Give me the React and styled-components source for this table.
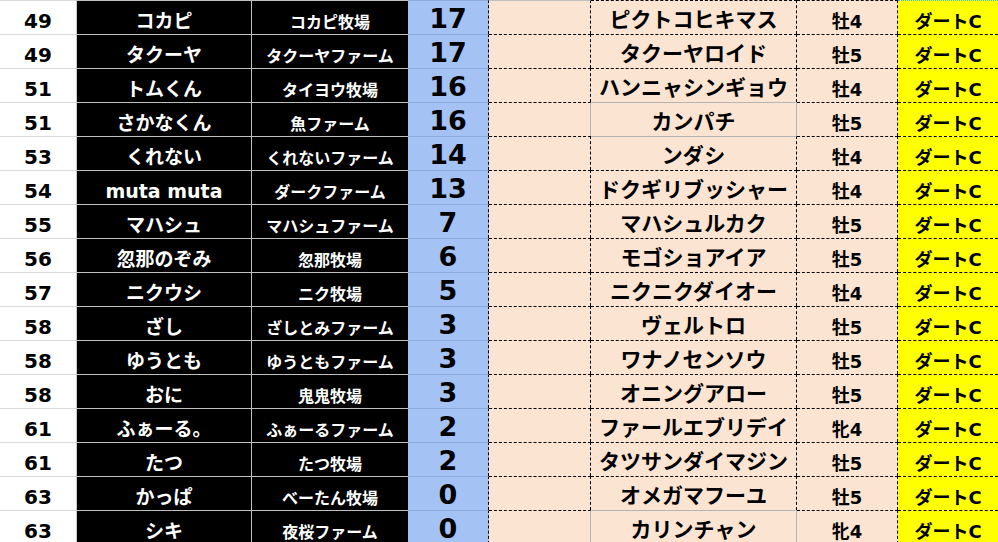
import styled, { createGlobalStyle, css } from 'styled-components';

const GlobalStyle = createGlobalStyle`
  html, body {
    margin: 0;
    padding: 0;
    background: #ffffff;
  }
  body {
    font-family: "DejaVu Sans", "Noto Sans CJK JP", sans-serif;
    font-weight: 700;
  }
`;

const GRID = '#bfbfbf';
const DOT = '1px dashed #000';
const PEACH = '#fce4d2';

// one entry per spreadsheet column
const columns = {
  rank: { width: 77, bg: '#ffffff', color: '#000', size: 20, top: '1px solid #d9d9d9', right: '1px solid #c8c8c8' },
  name: { width: 175, bg: '#000000', color: '#fff', size: 19, top: `1px solid ${GRID}`, right: `1px solid ${GRID}` },
  farm: { width: 156, bg: '#000000', color: '#fff', size: 16, top: `1px solid ${GRID}`, right: 'none' },
  point: { width: 81, bg: '#a4c2f4', color: '#000', size: 27, top: '1px solid #8eaadb', right: DOT },
  blank: { width: 102, bg: PEACH, color: '#000', size: 18, top: DOT, right: DOT },
  horse: { width: 206, bg: PEACH, color: '#000', size: 21, top: DOT, right: DOT },
  sex: { width: 101, bg: PEACH, color: '#000', size: 18, top: DOT, right: DOT },
  course: { width: 100, bg: '#ffff00', color: '#000', size: 18, top: DOT, right: 'none' },
};

const rows = [
  { rank: 49, name: 'コカピ', farm: 'コカピ牧場', point: 17, horse: 'ピクトコヒキマス', sex: '牡4' },
  { rank: 49, name: 'タクーヤ', farm: 'タクーヤファーム', point: 17, horse: 'タクーヤロイド', sex: '牡5' },
  { rank: 51, name: 'トムくん', farm: 'タイヨウ牧場', point: 16, horse: 'ハンニャシンギョウ', sex: '牡4' },
  { rank: 51, name: 'さかなくん', farm: '魚ファーム', point: 16, horse: 'カンパチ', sex: '牡5', boxed: true },
  { rank: 53, name: 'くれない', farm: 'くれないファーム', point: 14, horse: 'ンダシ', sex: '牡4' },
  { rank: 54, name: 'muta muta', farm: 'ダークファーム', point: 13, horse: 'ドクギリブッシャー', sex: '牡4' },
  { rank: 55, name: 'マハシュ', farm: 'マハシュファーム', point: 7, horse: 'マハシュルカク', sex: '牡5' },
  { rank: 56, name: '忽那のぞみ', farm: '忽那牧場', point: 6, horse: 'モゴショアイア', sex: '牡5' },
  { rank: 57, name: 'ニクウシ', farm: 'ニク牧場', point: 5, horse: 'ニクニクダイオー', sex: '牡4' },
  { rank: 58, name: 'ざし', farm: 'ざしとみファーム', point: 3, horse: 'ヴェルトロ', sex: '牡5' },
  { rank: 58, name: 'ゆうとも', farm: 'ゆうともファーム', point: 3, horse: 'ワナノセンソウ', sex: '牡5' },
  { rank: 58, name: 'おに', farm: '鬼鬼牧場', point: 3, horse: 'オニングアロー', sex: '牡5' },
  { rank: 61, name: 'ふぁーる。', farm: 'ふぁーるファーム', point: 2, horse: 'ファールエブリデイ', sex: '牝4' },
  { rank: 61, name: 'たつ', farm: 'たつ牧場', point: 2, horse: 'タツサンダイマジン', sex: '牡5' },
  { rank: 63, name: 'かっぱ', farm: 'べーたん牧場', point: 0, horse: 'オメガマフーユ', sex: '牡5' },
  { rank: 63, name: 'シキ', farm: '夜桜ファーム', point: 0, horse: 'カリンチャン', sex: '牝4', boxed: true },
];

const Sheet = styled.div`
  display: flex;
  flex-direction: column;
  width: 998px;
  height: 542px;
  overflow: hidden;
`;

const Row = styled.div`
  display: grid;
  grid-template-columns: ${Object.values(columns).map((c) => `${c.width}px`).join(' ')};
  height: 34px;
  flex: none;
`;

const Cell = styled.div`
  box-sizing: border-box;
  display: flex;
  align-items: flex-end;
  justify-content: center;
  white-space: nowrap;
  overflow: hidden;
  line-height: 1;
  padding-bottom: calc(5.8px - 0.154em);
  font-size: ${(p) => columns[p.$col].size}px;
  color: ${(p) => columns[p.$col].color};
  background: ${(p) => columns[p.$col].bg};
  border-top: ${(p) => p.$top || columns[p.$col].top};
  border-right: ${(p) => p.$right || columns[p.$col].right};
  ${(p) =>
    p.$first &&
    p.$col === 'blank' &&
    css`
      border-top: 1px solid ${GRID};
    `}
  ${(p) =>
    p.$first &&
    p.$col === 'course' &&
    css`
      border-top: 1px dotted #33c3e6;
    `}
`;

const BOX = '1px solid #b4b4b4';

export default function App() {
  return (
    <>
      <GlobalStyle />
      <Sheet>
        {rows.map((r, i) => {
          const first = i === 0;
          const prevBoxed = i > 0 && rows[i - 1].boxed;
          return (
            <Row key={i}>
              <Cell $col="rank" $first={first}>{r.rank}</Cell>
              <Cell $col="name" $first={first}>{r.name}</Cell>
              <Cell $col="farm" $first={first}>{r.farm}</Cell>
              <Cell $col="point" $first={first}>{r.point}</Cell>
              <Cell $col="blank" $first={first} $right={r.boxed ? BOX : undefined} />
              <Cell
                $col="horse"
                $first={first}
                $top={r.boxed || prevBoxed ? BOX : undefined}
                $right={r.boxed ? BOX : undefined}
              >
                {r.horse}
              </Cell>
              <Cell $col="sex" $first={first}>{r.sex}</Cell>
              <Cell $col="course" $first={first}>ダートC</Cell>
            </Row>
          );
        })}
      </Sheet>
    </>
  );
}
